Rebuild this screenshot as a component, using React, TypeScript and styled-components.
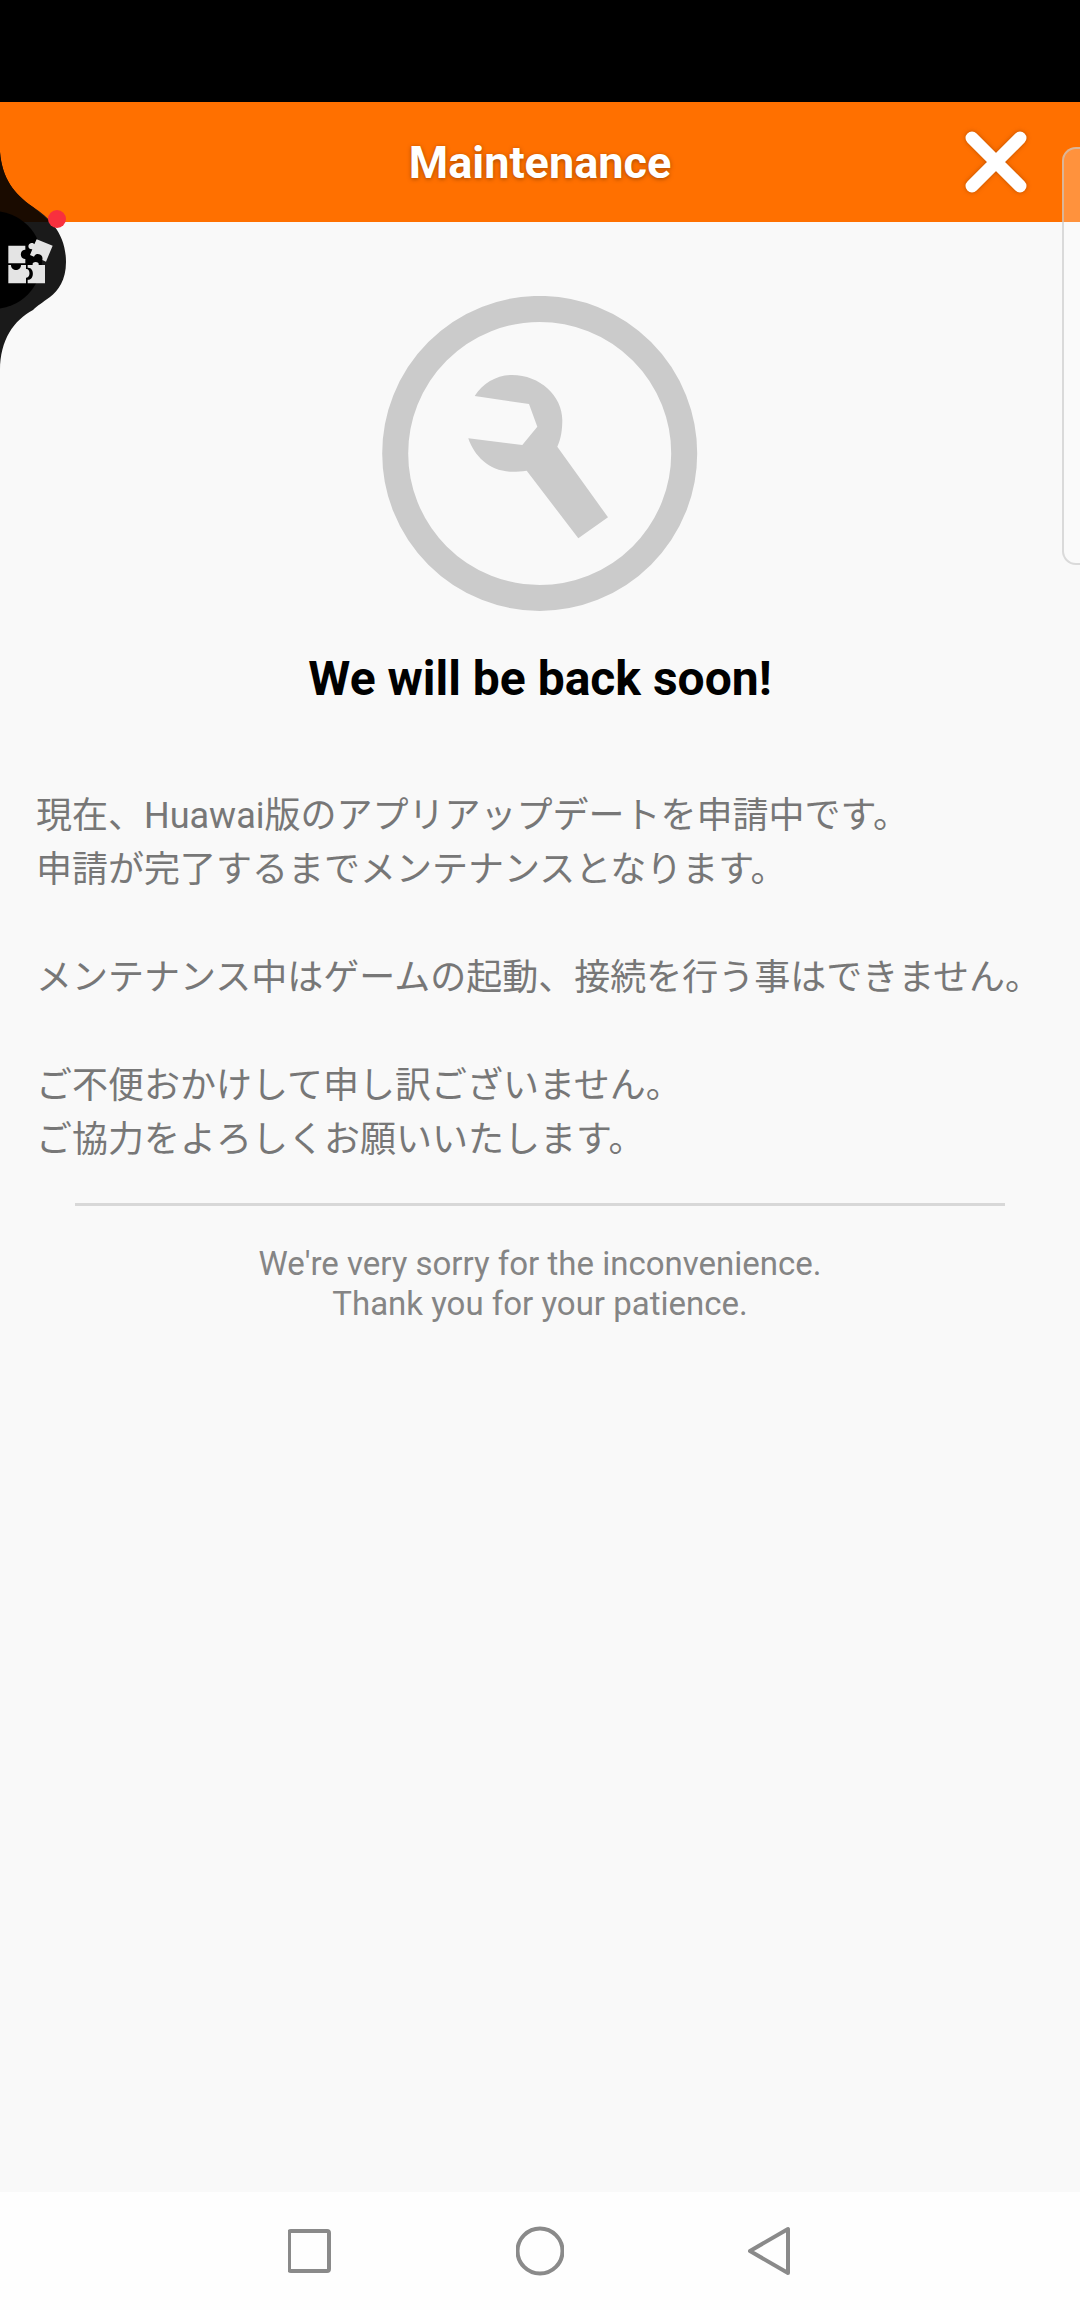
import React from "react";
import styled, { createGlobalStyle } from "styled-components";

const Global = createGlobalStyle`
  html, body { margin: 0; padding: 0; background: #000; }
  * { box-sizing: border-box; }
`;

const Page = styled.div`
  position: relative;
  width: 1080px;
  height: 2310px;
  display: flex;
  flex-direction: column;
  overflow: hidden;
  background: #f9f9f9;
  font-family: Roboto, "Noto Sans CJK JP", sans-serif;
`;

const StatusBar = styled.div`
  flex: 0 0 102px;
  background: #000;
`;

const Header = styled.header`
  flex: 0 0 120px;
  background: #ff7000;
  display: flex;
  align-items: center;
  justify-content: center;
  position: relative;
`;

const Title = styled.h1`
  margin: 0;
  color: #fff;
  font-size: 45px;
  font-weight: 700;
  text-shadow: 0 1px 4px rgba(90, 40, 0, 0.55);
`;

const CloseIcon = styled.svg`
  position: absolute;
  left: 962px;
  top: 26px;
  width: 68px;
  height: 68px;
  filter: drop-shadow(0 0 2px rgba(120, 50, 0, 0.5));
`;

const Content = styled.main`
  flex: 1;
  display: flex;
  flex-direction: column;
  align-items: center;
  padding-top: 74px;
`;

const RingIcon = styled.svg`
  display: block;
  width: 316px;
  height: 316px;
`;

const Heading = styled.h2`
  margin: 40px 0 0;
  color: #000;
  font-size: 48px;
  line-height: 54px;
  font-weight: 700;
`;

const Message = styled.div`
  align-self: stretch;
  margin-top: 83px;
  padding-left: 36px;
  color: #777;
  font-size: 36px;
  line-height: 54px;
`;

const MessageLine = styled.div`
  min-height: 54px;
  white-space: nowrap;
`;

const Divider = styled.hr`
  width: 930px;
  height: 3px;
  border: 0;
  margin: 36px 0 0;
  background: #d8d8d8;
`;

const Footer = styled.p`
  margin: 38px 0 0;
  color: #858585;
  font-size: 33px;
  line-height: 40px;
  text-align: center;
`;

const NavBar = styled.nav`
  flex: 0 0 118px;
  background: #fefefe;
  display: flex;
  align-items: center;
  justify-content: center;
  gap: 184px;
`;

const NavIcon = styled.svg<{ $w: number }>`
  display: block;
  width: ${(p) => p.$w}px;
  height: 50px;
  fill: none;
  stroke: #8a8a8a;
  stroke-width: 4;
  stroke-linejoin: round;
`;

const SideHandle = styled.svg`
  position: absolute;
  left: 0;
  top: 140px;
  width: 90px;
  height: 240px;
`;

const SidePanel = styled.div`
  position: absolute;
  left: 1062px;
  top: 147px;
  width: 40px;
  height: 418px;
  border: 2px solid rgba(200, 200, 200, 0.65);
  border-radius: 14px;
  background: rgba(255, 255, 255, 0.24);
`;

const lines = [
  "現在、Huawai版のアプリアップデートを申請中です。",
  "申請が完了するまでメンテナンスとなります。",
  "",
  "メンテナンス中はゲームの起動、接続を行う事はできません。",
  "",
  "ご不便おかけして申し訳ございません。",
  "ご協力をよろしくお願いいたします。",
];

export default function App() {
  return (
    <Page>
      <Global />
      <StatusBar />
      <Header>
        <Title>Maintenance</Title>
        <CloseIcon viewBox="0 0 68 68">
          <path d="M10 10 L58 58 M58 10 L10 58" stroke="#fff" strokeWidth="13" strokeLinecap="round" fill="none" />
        </CloseIcon>
      </Header>
      <Content>
        <RingIcon viewBox="0 0 316 316">
          <circle cx="157.7" cy="157.4" r="144.5" fill="none" stroke="#cbcbcb" strokeWidth="26" />
          <path
            d="M92.7 100 C101 87 115 79 130 79 C158 79 180.3 100 180.3 124 C180.3 134 179 143 175.3 150.7 L226 221.3 L196.3 242.3 L144.7 174.7 C140 175.5 135 175.7 130 175.7 C108 175.7 92 160 86.3 142.3 L140.3 149 L155.3 130.7 L147 108 Z"
            fill="#cbcbcb"
          />
        </RingIcon>
        <Heading>We will be back soon!</Heading>
        <Message>
          {lines.map((line, i) => (
            <MessageLine key={i}>{line}</MessageLine>
          ))}
        </Message>
        <Divider />
        <Footer>
          We're very sorry for the inconvenience.
          <br />
          Thank you for your patience.
        </Footer>
      </Content>
      <NavBar>
        <NavIcon $w={44} viewBox="0 0 44 50">
          <rect x="1" y="5" width="40" height="40" rx="2" />
        </NavIcon>
        <NavIcon $w={48} viewBox="0 0 48 50">
          <circle cx="24" cy="25" r="22.5" />
        </NavIcon>
        <NavIcon $w={44} viewBox="0 0 44 50">
          <path d="M40 3 V47 L2 25 Z" />
        </NavIcon>
      </NavBar>
      <SideHandle viewBox="0 0 90 240">
        <path d="M0 12 C2 38 14 54 33 67 C50 78 66 94 66 122 C66 140 58 151 50 157 C42 163 38 165 33 170 C14 180 0 200 0 230 Z" fill="#1a1a1a" />
        <path d="M0 12 C2 38 14 54 33 67 L50 82 L0 82 Z" fill="#1a0b00" />
        <circle cx="-7" cy="120" r="49" fill="#000" />
        <g transform="translate(0 65) scale(0.3333)" fill="#e4e4e4">
          <path d="M25 122 H76 V134 C58 132 58 164 76 162 V175 H25 Z" />
          <path d="M25 180 H33 C33 200 63 200 63 180 H78 V192 C92 190 92 220 78 218 V235 H25 Z" />
          <path d="M83 180 H98 C94 168 120 168 116 180 H135 V235 H83 V224 C104 226 104 186 83 188 Z" />
          <path d="M110 103 L158 122 L138 170 L127 165 C132 148 108 140 102 155 L90 150 L97 133 C84 134 80 118 94 114 C98 113 102 115 103 118 Z" />
        </g>
        <circle cx="57" cy="79" r="9" fill="#f8303e" />
      </SideHandle>
      <SidePanel />
    </Page>
  );
}
